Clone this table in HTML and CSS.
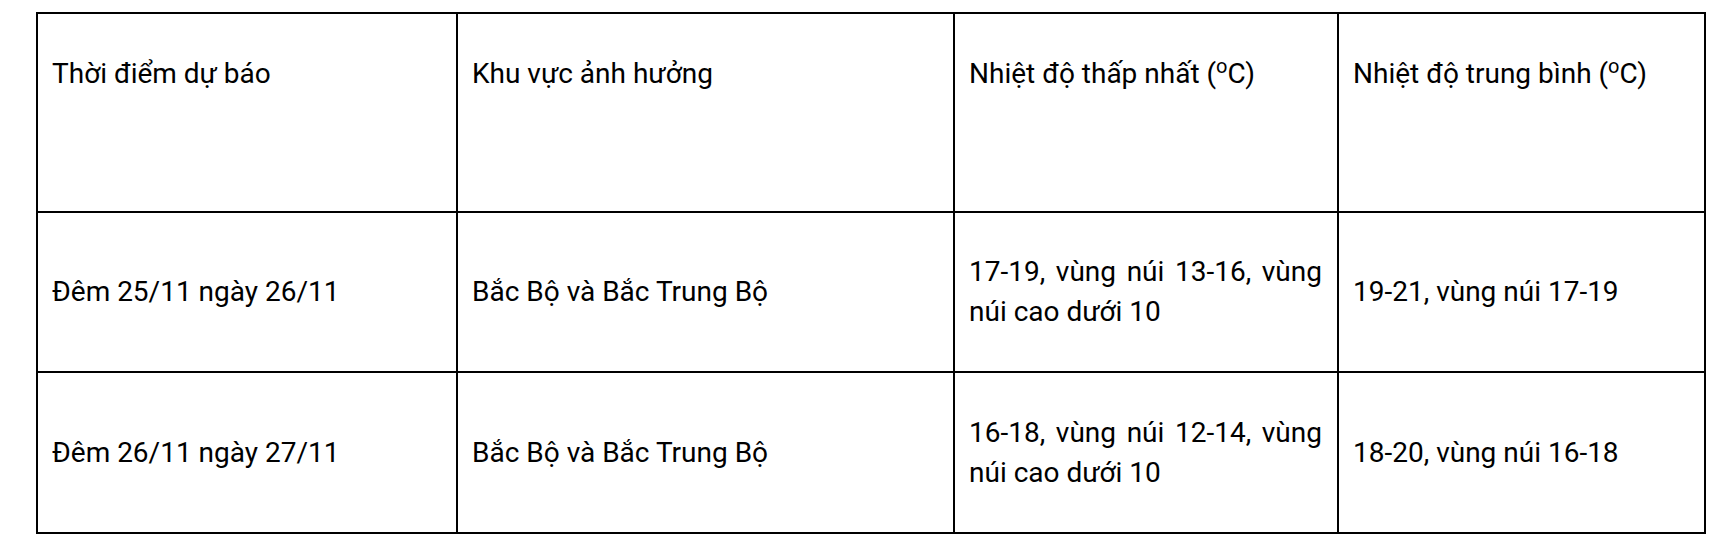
FILE: index.html
```html
<!DOCTYPE html>
<html lang="vi">
<head>
<meta charset="utf-8">
<title>Dự báo nhiệt độ</title>
<link rel="stylesheet" href="styles.css">
</head>
<body>
<table class="forecast">
  <colgroup>
    <col class="c1">
    <col class="c2">
    <col class="c3">
    <col class="c4">
  </colgroup>
  <thead>
    <tr class="head">
      <th>Thời điểm dự báo</th>
      <th>Khu vực ảnh hưởng</th>
      <th>Nhiệt độ thấp nhất (<sup>o</sup>C)</th>
      <th>Nhiệt độ trung bình (<sup>o</sup>C)</th>
    </tr>
  </thead>
  <tbody>
    <tr class="row r1">
      <td>Đêm 25/11 ngày 26/11</td>
      <td>Bắc Bộ và Bắc Trung Bộ</td>
      <td class="just">17-19, vùng núi 13-16, vùng núi cao dưới 10</td>
      <td>19-21, vùng núi 17-19</td>
    </tr>
    <tr class="row r2">
      <td>Đêm 26/11 ngày 27/11</td>
      <td>Bắc Bộ và Bắc Trung Bộ</td>
      <td class="just">16-18, vùng núi 12-14, vùng núi cao dưới 10</td>
      <td>18-20, vùng núi 16-18</td>
    </tr>
  </tbody>
</table>
</body>
</html>
```

FILE: styles.css
```css
html, body {
  margin: 0;
  padding: 0;
  background: #fff;
}

body {
  font-family: Roboto, "Noto Sans", "Liberation Sans", sans-serif;
  font-size: 28px;
  line-height: 40px;
  color: #000;
}

.forecast {
  margin: 12px 0 0 36px;
  border-collapse: separate;
  border-spacing: 0;
  border-left: 2px solid #000;
  border-top: 2px solid #000;
  table-layout: fixed;
  width: 1670px;
}

.c1 { width: 420px; }
.c2 { width: 497px; }
.c3 { width: 384px; }
.c4 { width: 367px; }

.forecast th,
.forecast td {
  box-sizing: border-box;
  border-right: 2px solid #000;
  border-bottom: 2px solid #000;
  padding: 0 14px;
  text-align: left;
  font-weight: 400;
}

.forecast th {
  height: 199px;
  vertical-align: top;
  padding-top: 40px;
}

.forecast td {
  vertical-align: middle;
}

.r1 td { height: 160px; }
.r2 td { height: 161px; }

.forecast td.just {
  text-align: justify;
  padding-right: 15px;
}

sup {
  font-size: 20px;
  line-height: 0;
  vertical-align: 10px;
}
```
